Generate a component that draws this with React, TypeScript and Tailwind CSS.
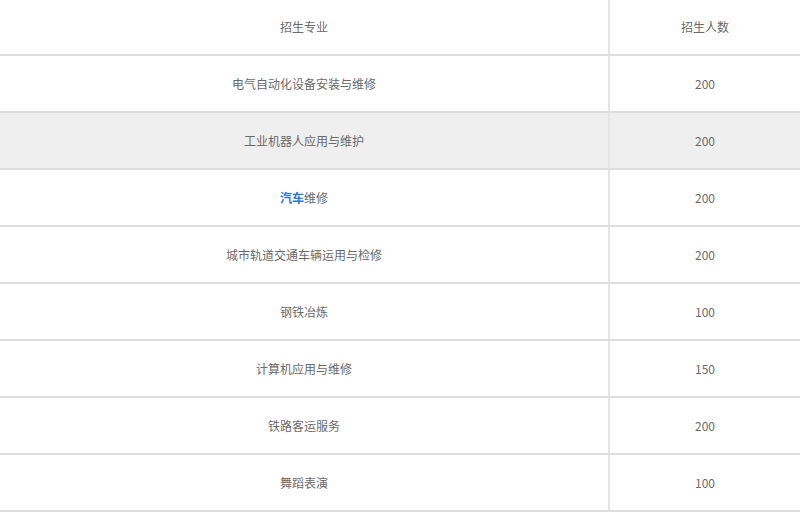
const rows = [
  { name: '电气自动化设备安装与维修', count: 200 },
  { name: '工业机器人应用与维护', count: 200, shaded: true },
  { name: 'link', count: 200 },
  { name: '城市轨道交通车辆运用与检修', count: 200 },
  { name: '钢铁冶炼', count: 100 },
  { name: '计算机应用与维修', count: 150 },
  { name: '铁路客运服务', count: 200 },
  { name: '舞蹈表演', count: 100 },
];

export default function App() {
  return (
    <div
      className="w-[800px] h-[513px] bg-white overflow-hidden text-[12px] text-[#6a6a6a]"
      style={{ fontFamily: '"Microsoft YaHei", "Noto Sans CJK SC", "Liberation Sans", sans-serif' }}
    >
      {/* 表头 */}
      <div className="grid grid-cols-[610px_1fr] h-[56px] border-b-2 border-[#dedede]">
        <div className="flex items-center justify-center border-r-2 border-[#e4e4e4]">招生专业</div>
        <div className="flex items-center justify-center">招生人数</div>
      </div>

      {rows.map((r, i) => (
        <div
          key={i}
          className={`grid grid-cols-[610px_1fr] h-[57px] border-b-2 border-[#dedede] ${
            r.shaded ? 'bg-[#efefef]' : 'bg-white'
          }`}
        >
          <div className="flex items-center justify-center border-r-2 border-[#e4e4e4]">
            {r.name === 'link' ? (
              <span>
                <a className="text-[#2a78d0] font-bold">汽车</a>维修
              </span>
            ) : (
              r.name
            )}
          </div>
          <div className="flex items-center justify-center">{r.count}</div>
        </div>
      ))}
    </div>
  );
}
